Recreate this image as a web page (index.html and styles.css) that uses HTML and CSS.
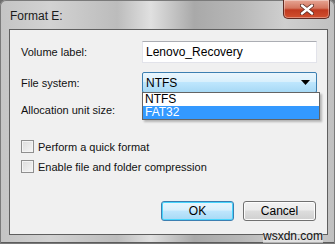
FILE: index.html
```html
<!DOCTYPE html>
<html lang="en">

<head>
  <meta charset="UTF-8">
  <title>Format E:</title>
  <link rel="stylesheet" href="styles.css">
</head>

<body>
  <div class="window">
    <div class="titlebar">
      <span class="title">Format E:</span>
      <button class="close" aria-label="Close">
        <svg width="14" height="11" viewBox="0 0 14 11">
          <path d="M2 1.5 L12 9.5 M12 1.5 L2 9.5" stroke="#5a2a22" stroke-width="4" stroke-linecap="round" />
          <path d="M2 1.5 L12 9.5 M12 1.5 L2 9.5" stroke="#fff" stroke-width="2.4" stroke-linecap="round" />
        </svg>
      </button>
    </div>
    <div class="client">
      <div class="row">
        <label for="volume">Volume label:</label>
        <input id="volume" class="textbox" type="text" value="Lenovo_Recovery">
      </div>
      <div class="row fs">
        <label>File system:</label>
        <div class="combo">
          <span>NTFS</span>
          <svg width="9" height="5" viewBox="0 0 9 5"><path d="M0 0 H9 L4.5 5 Z" fill="#000" /></svg>
          <ul class="list">
            <li>NTFS</li>
            <li class="sel">FAT32</li>
          </ul>
        </div>
      </div>
      <div class="row alloc">
        <label>Allocation unit size:</label>
      </div>
      <div class="checks">
        <label class="check"><span class="box"></span>Perform a quick format</label>
        <label class="check"><span class="box"></span>Enable file and folder compression</label>
      </div>
      <div class="buttons">
        <button class="btn ok">OK</button>
        <button class="btn">Cancel</button>
      </div>
    </div>
    <span class="mark">wsxdn.com</span>
  </div>
</body>

</html>
```

FILE: styles.css
```css
body,
html {
  margin: 0;
  padding: 0;
  font-family: "Liberation Sans", Arial, sans-serif;
  font-size: 11px;
  background-color: #6d6d6d;
}

.window {
  position: relative;
  width: 335px;
  height: 244px;
  box-sizing: border-box;
  padding: 0 7px 9px 9px;
  border-radius: 6px 6px 0 0;
  background: linear-gradient(90deg, #c4c4c4 0%, #d2d2d2 15%, #bcbcbc 35%, #e0e0e0 45%, #a9a9a9 58%, #b8b8b8 72%, #cfcfcf 85%, #c0c0c0 100%);
  box-shadow: inset 0 0 0 1px #7a7a7a, inset 0 -2px 0 #5c5c5c;
  display: flex;
  flex-direction: column;
}

.titlebar {
  height: 29px;
  display: flex;
  justify-content: space-between;
  align-items: flex-start;
}

.title {
  padding-top: 9px;
  padding-left: 1px;
  font-size: 12px;
  color: #1a1a1a;
}

.close {
  width: 47px;
  height: 19px;
  margin-right: -2px;
  padding: 0;
  border: 1px solid #5e2a23;
  border-top: 0;
  border-radius: 0 0 5px 5px;
  background: linear-gradient(#e6a594 0%, #d4765f 45%, #c0391f 55%, #d1502f 100%);
  box-shadow: inset 0 0 0 1px rgba(255, 255, 255, .35);
  display: flex;
  align-items: center;
  justify-content: center;
}

.client {
  flex-grow: 1;
  background-color: #f0f0f0;
  border: 1px solid #5f5f5f;
  padding: 11px 10px 0 11px;
  display: flex;
  flex-direction: column;
}

.row {
  display: flex;
  align-items: center;
  justify-content: space-between;
}

.row label {
  color: #111;
}

.textbox {
  width: 175px;
  height: 22px;
  box-sizing: border-box;
  margin: 0;
  border: 1px solid #e2e3ea;
  border-top-color: #abadb3;
  background: #fff;
  font: inherit;
  font-size: 12px;
  padding: 0 3px;
  color: #000;
}

.fs {
  margin-top: 9px;
}

.combo {
  position: relative;
  width: 175px;
  height: 21px;
  box-sizing: border-box;
  border: 1px solid #3c7fb1;
  border-radius: 2px;
  background: linear-gradient(#eaf6fd 0%, #d9f0fc 45%, #bee6fd 50%, #a7d9f5 100%);
  display: flex;
  align-items: center;
  justify-content: space-between;
  padding: 0 6px 0 3px;
  font-size: 12px;
}

.list {
  position: absolute;
  left: -1px;
  top: 19px;
  width: 176px;
  margin: 0;
  padding: 0;
  list-style: none;
  background: #fff;
  border: 1px solid #646464;
  box-shadow: 2px 2px 2px rgba(0, 0, 0, .25);
  z-index: 1;
  font-size: 12px;
}

.list li {
  height: 13px;
  line-height: 13px;
  padding: 0 2px;
}

.list li.sel {
  background-color: #3399ff;
  color: #fff;
}

.alloc {
  height: 21px;
  margin-top: 6px;
}

.checks {
  margin-top: 20px;
  display: flex;
  flex-direction: column;
  gap: 7px;
}

.check {
  display: flex;
  align-items: center;
  gap: 4px;
  height: 13px;
  color: #111;
}

.check .box {
  width: 11px;
  height: 11px;
  border: 1px solid #8f8f8f;
  background: linear-gradient(135deg, #dcdcdc, #f6f6f6);
  box-shadow: inset 0 0 0 1px #f4f4f4;
}

.buttons {
  margin-top: 28px;
  display: flex;
  justify-content: flex-end;
  gap: 9px;
  padding-right: 1px;
}

.btn {
  width: 73px;
  height: 20px;
  padding: 0;
  border: 1px solid #707070;
  border-radius: 3px;
  background: linear-gradient(#f2f2f2 0%, #ebebeb 45%, #dddddd 50%, #cfcfcf 100%);
  box-shadow: inset 0 0 0 1px #fcfcfc;
  font: inherit;
  font-size: 12px;
  color: #000;
}

.btn.ok {
  border-color: #3c7fb1;
  background: linear-gradient(#eaf6fd 0%, #d9f0fc 45%, #bee6fd 50%, #a7d9f5 100%);
  box-shadow: inset 0 0 0 1px #48d5fd;
}

.mark {
  position: absolute;
  right: 12px;
  bottom: 1px;
  font-size: 12px;
  color: #111;
  background: rgba(240, 240, 240, .6);
}
```
